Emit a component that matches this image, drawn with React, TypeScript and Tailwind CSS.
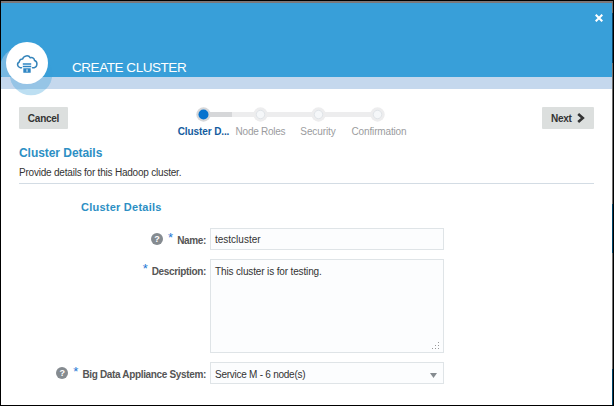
import React from "react";

function Help() {
  return (
    <span className="flex h-[12px] w-[12px] shrink-0 items-center justify-center rounded-full bg-[#858b90] text-[9px] font-bold leading-[12px] text-white">
      ?
    </span>
  );
}

function Label({ text, help }: { text: string; help?: boolean }) {
  return (
    <div className="flex h-[22px] w-[205px] shrink-0 items-center justify-end">
      {help && <Help />}
      <span className="mb-[3px] ml-[5px] mr-[4px] text-[13px] leading-[13px] text-[#1c78d4]">*</span>
      <span className="mt-[4px] whitespace-nowrap text-[10px] font-bold leading-[14px] tracking-[-0.34px] text-[#555]">{text}</span>
    </div>
  );
}

function Step({ name, active, className, labelClass }: { name: string; active?: boolean; className: string; labelClass: string }) {
  return (
    <div className={`flex flex-col items-center ${className}`}>
      <svg className="h-[15px] w-[15px] shrink-0" viewBox="0 0 15 15">
        <circle cx="7.5" cy="7.5" r="7.2" fill={active ? "#d6d7d9" : "#ededee"} />
        {active ? (
          <circle cx="7.5" cy="7.5" r="5" fill="#0572ce" />
        ) : (
          <circle cx="7.5" cy="7.5" r="4.2" fill="#f5f7f9" stroke="#e0e4e8" />
        )}
      </svg>
      <span className={`mt-[3px] whitespace-nowrap text-[10px] leading-[14px] ${labelClass}`}>{name}</span>
    </div>
  );
}

export default function App() {
  return (
    <div className="flex h-[406px] w-[614px] overflow-hidden border border-black bg-white font-['Liberation_Sans',sans-serif] text-[10px] text-[#333]">
      <div className="flex h-[404px] w-[611px] flex-col">
        <header className="relative h-[88px] shrink-0">
          <div className="h-[2px] bg-[#7d7778]" />
          <div className="flex h-[74px] items-end justify-between bg-[#389fd9]">
            <h1 className="mb-[1px] ml-[71px] whitespace-nowrap text-[13.5px] leading-[16px] tracking-[-0.45px] text-white">CREATE CLUSTER</h1>
            <svg className="mb-[55px] mr-[9px] h-2 w-2" viewBox="0 0 8 8" stroke="white" strokeWidth="2.1">
              <path d="M.7.7l6.6 6.6M7.3.7L.7 7.3" />
            </svg>
          </div>
          <div className="h-[12px] bg-[#c5d8ed]" />
          <svg className="absolute left-0 top-[36px] h-[62px] w-[60px]" viewBox="1 37 60 62">
            <circle cx="21.5" cy="68.5" r="21.5" fill="#c5d8ed" fillOpacity=".45" />
            <circle cx="31" cy="74" r="21.3" fill="#389fd9" fillOpacity=".33" />
            <circle cx="27" cy="63" r="21" fill="white" />
            <path
              d="M21.500 67.700h-1.200a3 3 0 0 1-1-5.700c.2-2 1.600-3.200 3.300-3 1-3.500 6-4.300 7.700-1.200 2.200-.8 4.200.5 4.200 2.600 3.300.8 3.300 6.400-.3 7.300H32.500"
              fill="none" stroke="#3584ba" strokeWidth="1.500" strokeLinecap="round" strokeLinejoin="round"
            />
            <path d="M22.800 63.200h8.400v1.500h-8.400zM22.800 65.700h8.400v1.500h-8.400zM23.300 68.200h7.400v4.600h-7.400z" fill="#2f86c4" />
            <path d="M26.200 69.300h1.700v2.400h-1.700z" fill="#a8cce4" />
          </svg>
        </header>

        <nav className="ml-[18px] mr-[18px] mt-[18px] flex h-[32px] shrink-0 items-start">
          <button className="h-[22px] w-[49px] rounded-[1px] bg-[#dcdfde] text-[10px] font-bold leading-[23px] tracking-[-0.25px] text-[#333]">Cancel</button>
          <div className="relative ml-[106px] flex items-start">
            <div className="absolute left-[30px] top-[5px] h-[5px] w-[174px] bg-[#ededee]" />
            <div className="absolute left-[30px] top-[5px] h-[5px] w-[28px] bg-[#d6d7d9]" />
            <div className="relative flex">
              <Step name="Cluster D..." active className="w-[58px]" labelClass="ml-[1px] font-bold tracking-[-0.1px] text-[#145c9e]" />
              <Step name="Node Roles" className="w-[57px]" labelClass="tracking-[-0.25px] text-[#9b9c9e]" />
              <Step name="Security" className="w-[58px]" labelClass="tracking-[-0.1px] text-[#9b9c9e]" />
              <Step name="Confirmation" className="w-[60px]" labelClass="ml-[4px] tracking-[-0.15px] text-[#9b9c9e]" />
            </div>
          </div>
          <button className="ml-auto flex h-[22px] w-[52px] items-center gap-[6px] rounded-[1px] bg-[#dcdfde] pl-[9px] text-[10px] font-bold text-[#333]">
            <span className="w-5 pt-[1px] text-left tracking-[-0.25px]">Next</span>
            <svg className="h-[10px] w-[8px]" viewBox="0 0 8 10" fill="none" stroke="#333" strokeWidth="2.600"><path d="M1.200 1l4.600 4-4.600 4" /></svg>
          </button>
        </nav>

        <main className="mx-[18px] flex flex-col">
          <h2 className="mt-[6px] text-[12px] font-bold leading-[16px] tracking-[-0.05px] text-[#2d8fc4]">Cluster Details</h2>
          <p className="mt-[6px] h-[17px] border-b border-[#d3dce4] leading-[12px] tracking-[-0.21px]">Provide details for this Hadoop cluster.</p>
          <h3 className="ml-[62px] mt-[15px] text-[11px] font-bold leading-[16px] tracking-[0.24px] text-[#2d8fc4]">Cluster Details</h3>
          <form className="ml-[-18px] mt-[13px] flex flex-col">
            <div className="flex items-center gap-[4px]">
              <Label text="Name:" help />
              <div className="h-[22px] w-[234px] border border-[#dfe4e7] bg-[#fcfdfe] pl-[4px] leading-[22px]">testcluster</div>
            </div>
            <div className="mt-[9px] flex gap-[4px]">
              <Label text="Description:" />
              <div className="flex h-[94px] w-[234px] items-start justify-between border border-[#dfe4e7] bg-[#fcfdfe] pl-[4px] pt-[6px] leading-[12px]">
                <span className="tracking-[-0.14px]">This cluster is for testing.</span>
                <svg className="mr-[3px] mt-[76px] h-2 w-2" viewBox="0 0 8 8" fill="#999"><path d="M6 0h1v1H6zM3 3h1v1H3zM6 3h1v1H6zM0 6h1v1H0zM3 6h1v1H3zM6 6h1v1H6z" /></svg>
              </div>
            </div>
            <div className="mt-[9px] flex gap-[4px]">
              <Label text="Big Data Appliance System:" help />
              <div className="flex h-[22px] w-[234px] items-center justify-between border border-[#dfe4e7] bg-[#fcfdfe] pl-[4px] pr-[6px]">
                <span className="mt-[2px] tracking-[-0.25px]">Service M - 6 node(s)</span>
                <svg className="mt-[5px] h-[5px] w-[7px]" viewBox="0 0 7 5" fill="#858b90"><path d="M0 0h7L3.500 5z" /></svg>
              </div>
            </div>
          </form>
        </main>
      </div>
      <div className="flex w-[1px] flex-col">
        <div className="h-[12px] bg-[#6f6f6f]" />
        <div className="h-[50px] bg-[#0b4568]" />
        <div className="h-[141px] bg-[#6f6f6f]" />
        <div className="h-[49px] bg-[#00456b]" />
        <div className="h-[116px] bg-[#6f6f6f]" />
        <div className="flex-1 bg-[#00456b]" />
      </div>
    </div>
  );
}
